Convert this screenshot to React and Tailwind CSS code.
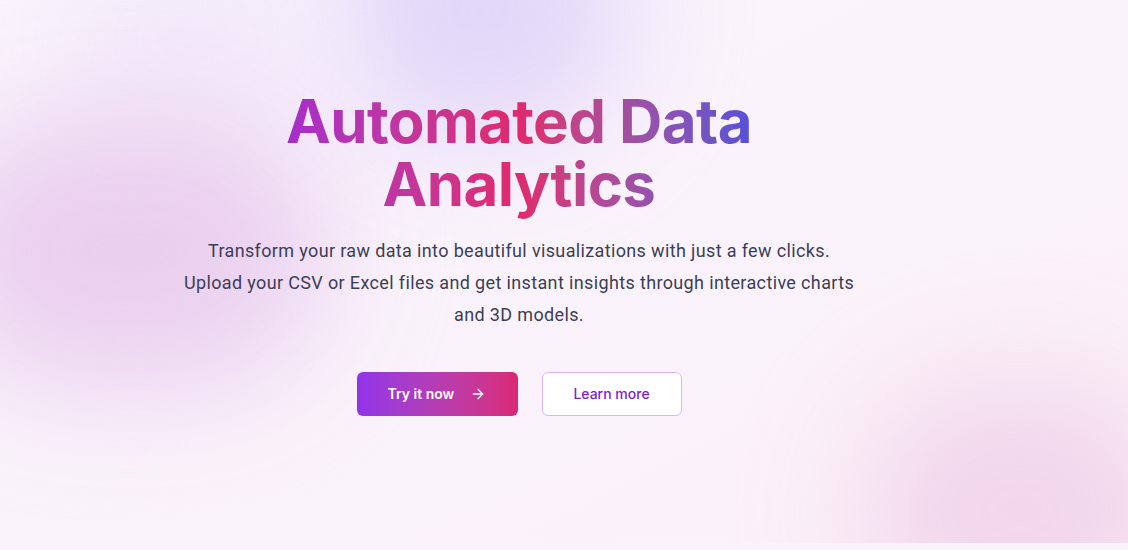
import React from "react";
import { ArrowRight } from "lucide-react";

function App() {
  return (
    <div className="min-h-[550px] bg-[#f9f3fa]" style={{ fontFamily: "Inter, 'Noto Sans', sans-serif" }}>
      <section className="relative h-[543px] overflow-hidden bg-gradient-to-br from-[#faf5fd] via-[#faf3fb] to-[#fcf0f7]">
        {/* blurred blobs */}
        <div className="absolute -top-[120px] left-[330px] h-[260px] w-[300px] rounded-full bg-[#dccff8] opacity-80 blur-[60px]" />
        <div className="absolute -top-[60px] left-[60px] h-[200px] w-[260px] rounded-full bg-[#f3eafa] opacity-90 blur-[50px]" />
        <div className="absolute top-[110px] -left-[70px] h-[280px] w-[400px] rounded-full bg-[#e9ccee] opacity-90 blur-[60px]" />
        <div className="absolute top-[380px] left-[860px] h-[260px] w-[320px] rounded-full bg-[#efcfe9] opacity-80 blur-[60px]" />

        <div className="relative flex flex-col items-center pr-[90px] pt-[90px]">
          <h1 className="w-fit bg-gradient-to-r from-[#a62dcb] via-[#e0286c] to-[#5650d8] bg-clip-text pb-2 text-center text-[60px] font-bold leading-[63px] tracking-[-0.01em] text-transparent">
            Automated Data
            <br />
            Analytics
          </h1>
          <p className="mt-[11px] text-center text-lg leading-8 tracking-[0.02em] text-[#3b3f55]" style={{ fontFamily: "Roboto, sans-serif" }}>
            Transform your raw data into beautiful visualizations with just a few clicks.
            <br />
            Upload your CSV or Excel files and get instant insights through interactive charts
            <br />
            and 3D models.
          </p>
          <div className="mt-[41px] flex gap-6">
            <button className="flex h-11 w-[161px] items-center justify-center gap-4 rounded-md bg-gradient-to-r from-[#9333ea] to-[#db2777] text-sm font-semibold text-white">
              Try it now
              <ArrowRight className="h-4 w-4" />
            </button>
            <button className="h-11 w-[140px] rounded-md border border-[#d8b4fe] bg-white text-sm font-medium text-[#7e22ce]">
              Learn more
            </button>
          </div>
        </div>
      </section>
    </div>
  );
}

export default App;
